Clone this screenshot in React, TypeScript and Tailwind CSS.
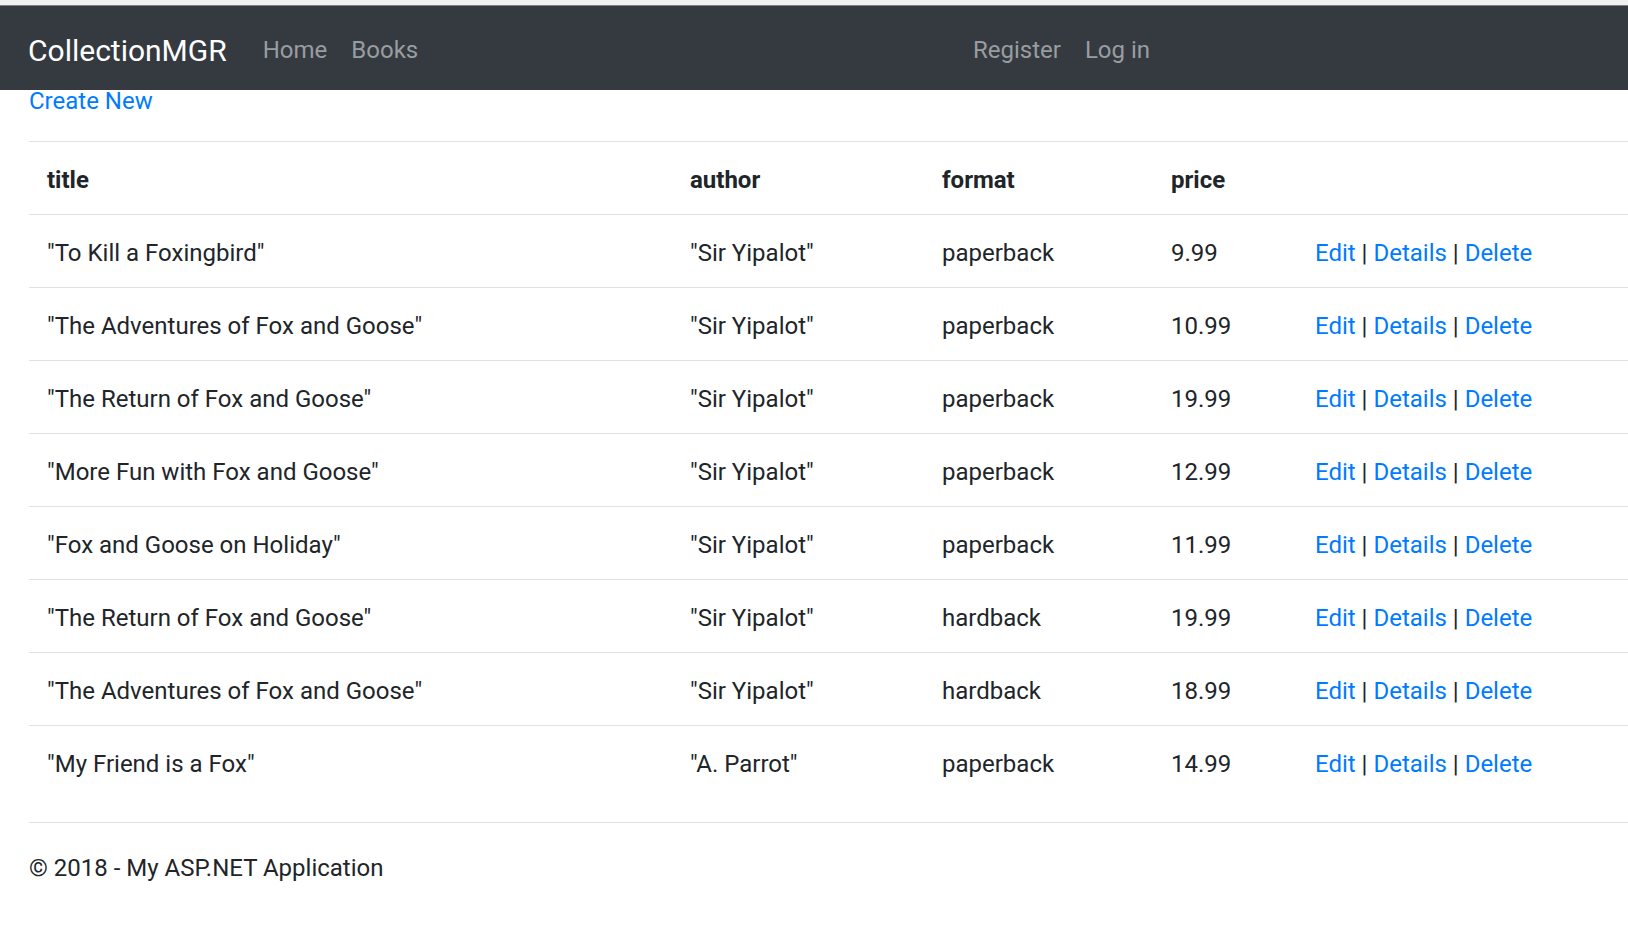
const books = [
  { title: '"To Kill a Foxingbird"', author: '"Sir Yipalot"', format: 'paperback', price: '9.99' },
  { title: '"The Adventures of Fox and Goose"', author: '"Sir Yipalot"', format: 'paperback', price: '10.99' },
  { title: '"The Return of Fox and Goose"', author: '"Sir Yipalot"', format: 'paperback', price: '19.99' },
  { title: '"More Fun with Fox and Goose"', author: '"Sir Yipalot"', format: 'paperback', price: '12.99' },
  { title: '"Fox and Goose on Holiday"', author: '"Sir Yipalot"', format: 'paperback', price: '11.99' },
  { title: '"The Return of Fox and Goose"', author: '"Sir Yipalot"', format: 'hardback', price: '19.99' },
  { title: '"The Adventures of Fox and Goose"', author: '"Sir Yipalot"', format: 'hardback', price: '18.99' },
  { title: '"My Friend is a Fox"', author: '"A. Parrot"', format: 'paperback', price: '14.99' },
]

const cell = 'px-[18px] pt-[20px] pb-[16px] leading-[36px] whitespace-nowrap'

export default function App() {
  return (
    <div className="min-h-screen bg-white text-[#212529] font-['Roboto',sans-serif] text-[24px] overflow-hidden">
      <div className="h-[5px] bg-[#f1f1f1] border-b border-[#7f7f7f] box-content" />

      {/* Navbar */}
      <nav className="h-[84px] bg-[#343a40] flex items-center pl-[28px] pt-[4px]">
        <div className="w-[933px] flex items-center">
          <a className="text-[30px] text-white mr-[24px] leading-[45px]">CollectionMGR</a>
          <a className="px-[12px] text-[#9a9da0] leading-[36px]">Home</a>
          <a className="px-[12px] text-[#9a9da0] leading-[36px]">Books</a>
        </div>
        <a className="px-[12px] text-[#9a9da0] leading-[36px]">Register</a>
        <a className="px-[12px] text-[#9a9da0] leading-[36px]">Log in</a>
      </nav>

      <main className="pl-[29px]">
        <p className="leading-[22px] mb-[29px]">
          <a className="text-[#007bff]">Create New</a>
        </p>

        <table className="w-full table-fixed border-collapse mb-[24px]">
          <colgroup>
            <col className="w-[643px]" />
            <col className="w-[252px]" />
            <col className="w-[229px]" />
            <col className="w-[144px]" />
            <col />
          </colgroup>
          <thead>
            <tr className="border-t border-[#dee2e6] text-left font-bold">
              <th className={cell}>title</th>
              <th className={cell}>author</th>
              <th className={cell}>format</th>
              <th className={cell}>price</th>
              <th className={cell}></th>
            </tr>
          </thead>
          <tbody>
            {books.map((b, i) => (
              <tr key={i} className="border-t border-[#dee2e6]">
                <td className={cell}>{b.title}</td>
                <td className={cell}>{b.author}</td>
                <td className={cell}>{b.format}</td>
                <td className={cell}>{b.price}</td>
                <td className={cell}>
                  <a className="text-[#007bff]">Edit</a> | <a className="text-[#007bff]">Details</a> |{' '}
                  <a className="text-[#007bff]">Delete</a>
                </td>
              </tr>
            ))}
          </tbody>
        </table>

        <hr className="border-t border-[#dee2e6]" />
        <footer className="mt-[27px] leading-[36px]">
          <p>© 2018 - My ASP.NET Application</p>
        </footer>
      </main>
    </div>
  )
}
